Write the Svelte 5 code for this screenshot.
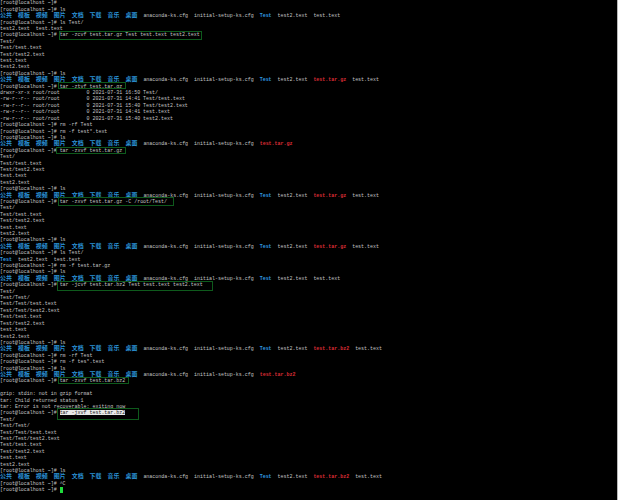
<script lang="ts">
    const P = '[root@localhost ~]# ';
    const names = ['公共', '模板', '视频', '图片', '文档', '下载', '音乐', '桌面'];

    type Seg = { t: string; c?: string };

    // the ls listing, files differ from one run to the next
    function listing(rest: Seg[]): Seg[] {
        const out: Seg[] = [];
        names.forEach((n) => {
            out.push({ t: n, c: 'cjk' });
            out.push({ t: '  ' });
        });
        out.push({ t: 'anaconda-ks.cfg  initial-setup-ks.cfg  ' });
        return out.concat(rest);
    }

    const dir = { t: 'Test', c: 'dir' };
    const sp = { t: '  ' };
    const gz = { t: 'test.tar.gz', c: 'arc' };
    const bz = { t: 'test.tar.bz2', c: 'arc' };
    const t2 = { t: 'test2.text' };
    const t1 = { t: 'test.text' };

    const plain = listing([dir, sp, t2, sp, t1]);
    const withGz = listing([dir, sp, t2, sp, gz, sp, t1]);
    const withBz = listing([dir, sp, t2, sp, bz, sp, t1]);

    const short = ['Test/', 'Test/test.text', 'Test/test2.text', 'test.text', 'test2.text'];
    const long = ['Test/', 'Test/Test/', 'Test/Test/test.text', 'Test/Test/test2.text', 'Test/test.text', 'Test/test2.text', 'test.text', 'test2.text'];

    const lines: (string | Seg[])[] = [
        P,
        P + 'ls',
        plain,
        P + 'ls Test/',
        'test2.text  test.text',
        P + 'tar -zcvf test.tar.gz Test test.text test2.text',
        ...short,
        P + 'ls',
        withGz,
        P + 'tar -ztvf test.tar.gz',
        'drwxr-xr-x root/root         0 2021-07-31 16:50 Test/',
        '-rw-r--r-- root/root         0 2021-07-31 14:41 Test/test.text',
        '-rw-r--r-- root/root         0 2021-07-31 15:40 Test/test2.text',
        '-rw-r--r-- root/root         0 2021-07-31 14:41 test.text',
        '-rw-r--r-- root/root         0 2021-07-31 15:40 test2.text',
        P + 'rm -rf Test',
        P + 'rm -f test*.text',
        P + 'ls',
        listing([gz]),
        P + 'tar -zxvf test.tar.gz',
        ...short,
        P + 'ls',
        withGz,
        P + 'tar -zxvf test.tar.gz -C /root/Test/',
        ...short,
        P + 'ls',
        withGz,
        P + 'ls Test/',
        [dir, sp, t2, sp, t1],
        P + 'rm -f test.tar.gz',
        P + 'ls',
        plain,
        P + 'tar -jcvf test.tar.bz2 Test test.text test2.text',
        ...long,
        P + 'ls',
        withBz,
        P + 'rm -rf Test',
        P + 'rm -f tes*.text',
        P + 'ls',
        listing([bz]),
        P + 'tar -zxvf test.tar.bz2',
        '',
        'gzip: stdin: not in gzip format',
        'tar: Child returned status 1',
        'tar: Error is not recoverable: exiting now',
        [{ t: P }, { t: 'tar -jxvf test.tar.bz2', c: 'sel' }],
        ...long,
        P + 'ls',
        withBz,
        P + '^C',
        [{ t: P }, { t: ' ', c: 'cursor' }],
    ];

    // green marker boxes someone drew over the screenshot
    const boxes = [
        [59, 31, 143, 9],
        [58, 82, 68, 7],
        [56, 147, 70, 7],
        [58, 197, 116, 9],
        [57, 281, 156, 10],
        [58, 377, 71, 7],
        [57, 408, 82, 12],
    ];
</script>

<div class="term">
    {#each lines as line}
        <div class="line">
            {#if typeof line === 'string'}
                {line}
            {:else}
                {#each line as seg}<span class={seg.c}>{seg.t}</span>{/each}
            {/if}
        </div>
    {/each}
    {#each boxes as [x, y, w, h]}
        <div class="box" style="left:{x}px;top:{y}px;width:{w}px;height:{h}px"></div>
    {/each}
</div>

<style>
    :global(body) {
        background: #000;
        overflow: hidden;
    }
    .term {
        position: relative;
        box-sizing: border-box;
        width: 618px;
        height: 500px;
        padding-top: 0.4px;
        background: #000;
        border-right: 1px solid #b8b8b8;
        font-family: 'Liberation Mono', monospace;
        font-size: 4.975px;
        color: #c4c4c4;
        overflow: hidden;
    }
    .line {
        height: 6.41px;
        line-height: 6.41px;
        white-space: pre;
    }
    .cjk {
        font-family: 'Noto Sans CJK SC', sans-serif;
        font-size: 5.97px;
        line-height: 0;
        font-weight: 700;
        color: #2a90d4;
    }
    .dir {
        font-weight: 700;
        color: #2f9be0;
    }
    .arc {
        font-weight: 700;
        color: #dc2c34;
    }
    .sel {
        background: #e8e8e8;
        color: #222;
    }
    .cursor {
        display: inline-block;
        width: 3px;
        height: 6px;
        vertical-align: top;
        background: #1fdc3c;
    }
    .box {
        position: absolute;
        box-sizing: border-box;
        border: 1px solid #0e5a1c;
    }
</style>
